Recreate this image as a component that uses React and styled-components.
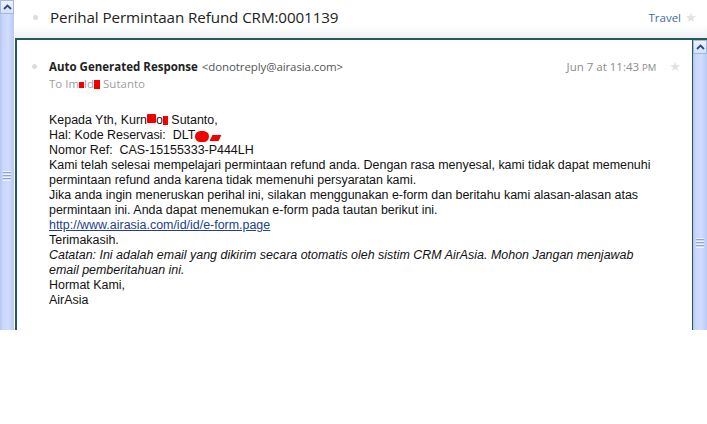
import React from 'react'
import styled, { createGlobalStyle } from "styled-components";

const Global = createGlobalStyle`
    html, body {
        margin: 0;
        padding: 0;
        background: #fff;
    }
    body {
        font-family: "Liberation Sans", Arial, sans-serif;
    }
`;

const Page = styled.div`
    display: flex;
    width: 707px;
    height: 330px;
    overflow: hidden;
`;

const Scrollbar = styled.div`
    position: relative;
    width: ${p => p.$width}px;
    flex-shrink: 0;
    background: linear-gradient(to right, #b3c4f0 0, #c9d7fc 20%, #cfdcfd 60%, #b9c9f2 100%);
    border-left: ${p => p.$border ? '1px solid #245a58' : 'none'};
`;

const ArrowBtn = styled.div`
    width: 100%;
    height: 14px;
    box-sizing: border-box;
    border: 1px solid #a3b8e6;
    background: linear-gradient(#eef3fe, #d5e0fb);
    display: flex;
    align-items: center;
    justify-content: center;
`;

const Grip = styled.div`
    position: absolute;
    left: 3px;
    right: 3px;
    top: ${p => p.$top}px;
    height: 10px;
    background: repeating-linear-gradient(#eef3ff 0, #eef3ff 1px, #8ea4d8 1px, #8ea4d8 2px, transparent 2px, transparent 3px);
`;

const Gap = styled.div`
    width: 1px;
    flex-shrink: 0;
`;

const Main = styled.div`
    flex: 1;
    display: flex;
    flex-direction: column;
    min-width: 0;
`;

const Header = styled.div`
    height: 38px;
    flex-shrink: 0;
    display: flex;
    align-items: center;
    padding: 0 10px 4px 18px;
    box-sizing: border-box;
    background: linear-gradient(#fff 0, #fff 68%, #edf0f4 100%);
`;

const Dot = styled.span`
    width: 5px;
    height: 5px;
    border-radius: 50%;
    background: #dcdcdc;
    flex-shrink: 0;
    margin-right: 12px;
`;

const Subject = styled.div`
    flex: 1;
    font-family: "Open Sans", "DejaVu Sans", sans-serif;
    font-size: 15.2px;
    color: #222;
    letter-spacing: -0.1px;
`;

const Label = styled.span`
    font-family: "Open Sans", sans-serif;
    font-size: 11.5px;
    color: #3b6ea8;
    margin-right: 4px;
`;

const Star = styled.span`
    font-size: 13px;
    color: #e2e2e2;
    line-height: 1;
    margin-right: ${p => p.$mr || 0}px;
`;

const Frame = styled.div`
    flex: 1;
    display: flex;
    border-top: 2px solid #245a58;
    border-left: 2px solid #245a58;
    min-height: 0;
`;

const Content = styled.div`
    flex: 1;
    padding: 18px 0 0 15px;
    min-width: 0;
`;

const MetaRow = styled.div`
    display: flex;
    align-items: center;
    height: 17px;
    font-family: "Open Sans", "DejaVu Sans", sans-serif;
    font-size: 11.5px;
`;

const Sender = styled.div`
    flex: 1;
    color: #222;
    white-space: nowrap;
    b {
        font-weight: 700;
    }
`;

const Email = styled.span`
    color: #555;
    margin-left: 4px;
    letter-spacing: -0.1px;
`;

const DateText = styled.span`
    color: #8c8c8c;
    margin-right: 13px;
    small {
        font-size: 9.5px;
    }
`;

const ToLine = styled.div`
    height: 17px;
    line-height: 17px;
    padding-left: 17px;
    font-family: "Open Sans", "DejaVu Sans", sans-serif;
    font-size: 11.5px;
    color: #a0a0a0;
`;

const Body = styled.div`
    margin-top: 21px;
    padding-left: 17px;
    font-family: "Liberation Sans", Arial, sans-serif;
    font-size: 12.45px;
    line-height: 15px;
    color: #111;
`;

const Line = styled.div`
    white-space: nowrap;
    font-style: ${p => p.$italic ? 'italic' : 'normal'};
`;

const Link = styled.a`
    color: #233f8f;
    text-decoration: underline;
`;

const Redact = styled.span`
    display: inline-block;
    width: ${p => p.$w}px;
    height: ${p => p.$h}px;
    background: #f20000;
    vertical-align: ${p => p.$v || 0}px;
    border-radius: ${p => p.$r || 0}px;
    margin-left: ${p => p.$ml || 0}px;
    transform: ${p => p.$skew ? 'skewX(-25deg)' : 'none'};
`;

const Chevron = () => (
    <svg width="9" height="6" viewBox="0 0 9 6">
        <path d="M1 5 L4.5 1.5 L8 5" fill="none" stroke="#2c4a8a" strokeWidth="1.8" />
    </svg>
);

const App = () => {
    return (
        <Page>
            <Global />
            <Scrollbar $width={14}>
                <ArrowBtn><Chevron /></ArrowBtn>
                <Grip $top={171} />
            </Scrollbar>
            <Gap />
            <Main>
                <Header>
                    <Dot />
                    <Subject>Perihal Permintaan Refund CRM:0001139</Subject>
                    <Label>Travel</Label>
                    <Star>★</Star>
                </Header>
                <Frame>
                    <Content>
                        <MetaRow>
                            <Dot />
                            <Sender>
                                <b>Auto Generated Response</b>
                                <Email>&lt;donotreply@airasia.com&gt;</Email>
                            </Sender>
                            <DateText>Jun 7 at 11:43 <small>PM</small></DateText>
                            <Star $mr={11}>★</Star>
                        </MetaRow>
                        <ToLine>
                            To Im<Redact $w={5} $h={6} $v={0} />ld<Redact $w={6} $h={9} $v={-1} /> Sutanto
                        </ToLine>
                        <Body>
                            <Line>Kepada Yth, Kurn<Redact $w={9} $h={9} $v={1} $r={1} />o<Redact $w={5} $h={9} $v={-1} /> Sutanto,</Line>
                            <Line>Hal: Kode Reservasi:&nbsp; DLT<Redact $w={14} $h={11} $v={-3} $r={6} /><Redact $w={9} $h={6} $v={-2} $ml={2} $skew /></Line>
                            <Line>Nomor Ref:&nbsp; CAS-15155333-P444LH</Line>
                            <Line>Kami telah selesai mempelajari permintaan refund anda. Dengan rasa menyesal, kami tidak dapat memenuhi</Line>
                            <Line>permintaan refund anda karena tidak memenuhi persyaratan kami.</Line>
                            <Line>Jika anda ingin meneruskan perihal ini, silakan menggunakan e-form dan beritahu kami alasan-alasan atas</Line>
                            <Line>permintaan ini. Anda dapat menemukan e-form pada tautan berikut ini.</Line>
                            <Line><Link href="#">http://www.airasia.com/id/id/e-form.page</Link></Line>
                            <Line>Terimakasih.</Line>
                            <Line $italic>Catatan: Ini adalah email yang dikirim secara otomatis oleh sistim CRM AirAsia. Mohon Jangan menjawab</Line>
                            <Line $italic>email pemberitahuan ini.</Line>
                            <Line>Hormat Kami,</Line>
                            <Line>AirAsia</Line>
                        </Body>
                    </Content>
                    <Scrollbar $width={14} $border>
                        <ArrowBtn><Chevron /></ArrowBtn>
                        <Grip $top={198} />
                    </Scrollbar>
                </Frame>
            </Main>
        </Page>
    )
}

export default App
